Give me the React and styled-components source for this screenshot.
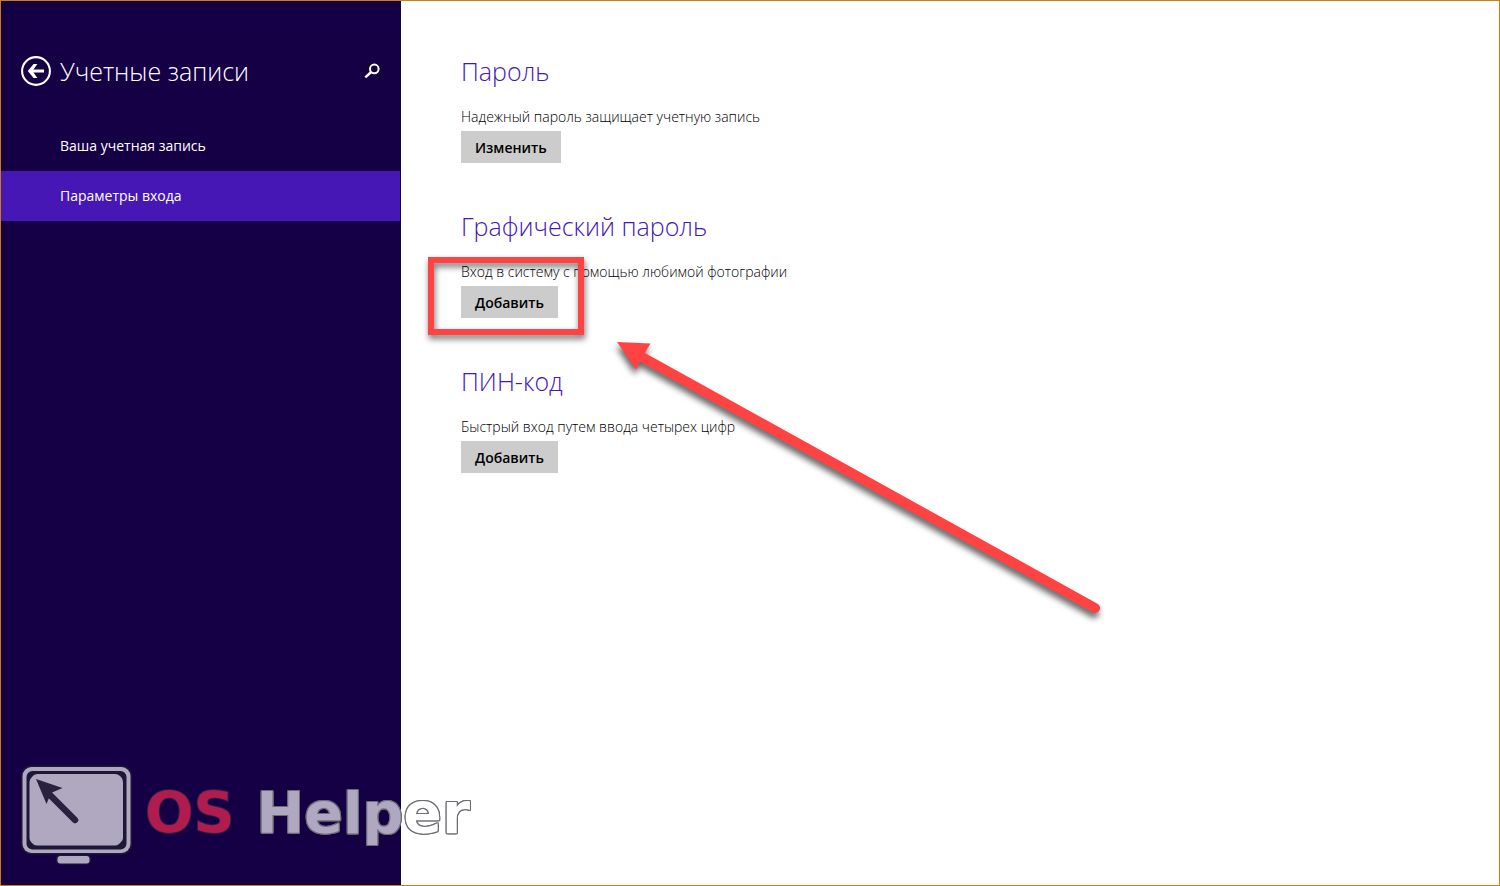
import React from "react";
import styled, { createGlobalStyle } from "styled-components";

const GlobalStyle = createGlobalStyle`
  * {
    box-sizing: border-box;
  }
  body {
    margin: 0;
    background: #fff;
    color: #000;
    font-family: "Open Sans", "Noto Sans", sans-serif;
    font-size: 14px;
  }
`;

const Page = styled.div`
  position: relative;
  display: flex;
  min-height: 100vh;
  border: 1px solid #d07c10;
  overflow: hidden;
`;

const Sidebar = styled.aside`
  display: flex;
  flex-direction: column;
  flex: 0 0 400px;
  padding-top: 52px;
  background: #160045;
  color: #fff;
`;

const Header = styled.header`
  display: flex;
  align-items: center;
  height: 36px;
  padding: 0 21px 0 20px;
  margin-bottom: 32px;
`;

const IconButton = styled.button`
  display: flex;
  padding: 0;
  border: none;
  background: transparent;
  color: inherit;
  cursor: pointer;
`;

const Title = styled.h1`
  flex: 1;
  margin: 0 0 0 9px;
  font-size: 25px;
  font-weight: 300;
  line-height: 36px;
`;

const NavLink = styled.a`
  display: block;
  height: 50px;
  margin-right: 1px;
  padding-left: 59px;
  line-height: 50px;
  color: #fff;
  text-decoration: none;
  background: ${({ $active }) => ($active ? "#4617b4" : "transparent")};
`;

const Main = styled.main`
  flex: 1;
  padding: 52px 60px;
`;

const Section = styled.section`
  position: relative;
  margin-bottom: 45px;
`;

const Heading = styled.h2`
  margin: 0 0 17px;
  font-size: 25px;
  font-weight: 300;
  line-height: 36px;
  color: #4617b4;
`;

const Description = styled.p`
  margin: 0 0 3px;
  font-weight: 300;
  line-height: 22px;
`;

const ActionButton = styled.button`
  display: block;
  height: 32px;
  padding: 0 14px;
  border: none;
  background: #ccc;
  color: #000;
  font-family: inherit;
  font-size: 14px;
  font-weight: 600;
  cursor: pointer;
`;

const Highlight = styled.div`
  position: absolute;
  top: 49px;
  left: -33px;
  width: 156px;
  height: 78px;
  border: 6px solid #ff4343;
  filter: drop-shadow(1px 4px 3px rgba(0, 0, 0, 0.55));
  pointer-events: none;
`;

const Arrow = styled.svg`
  position: absolute;
  top: 124px;
  left: 146px;
  filter: drop-shadow(-1px 5px 3px rgba(0, 0, 0, 0.6));
  pointer-events: none;
`;

const Logo = styled.div`
  position: absolute;
  left: 19px;
  bottom: 20px;
  display: flex;
  align-items: center;
  gap: 12px;
  pointer-events: none;
`;

const LogoText = styled.div`
  display: flex;
  gap: 22px;
  padding-bottom: 4px;
  font-family: "DejaVu Sans", sans-serif;
  font-size: 57px;
  font-weight: bold;
  line-height: 64px;
  paint-order: stroke;
  -webkit-text-stroke: 2px rgba(60, 60, 72, 0.5);
`;

const LogoOs = styled.span`
  color: #b01c4e;
`;

// the wordmark runs past the sidebar, so its fill turns white there
const LogoHelper = styled.span`
  color: transparent;
  background: linear-gradient(to right, #b0a8c0 145px, #fff 145px);
  background-clip: text;
  -webkit-text-stroke: 0;
  filter: drop-shadow(1px 0 0 #6c6c74) drop-shadow(-1px 0 0 #6c6c74)
    drop-shadow(0 1px 0 #6c6c74) drop-shadow(0 -1px 0 #6c6c74);
`;

const BackIcon = () => (
  <svg width="30" height="30" viewBox="0 0 30 30" fill="none" stroke="currentColor">
    <circle cx="15" cy="15" r="13.9" strokeWidth="2.1" />
    <path d="M9 15H23" strokeWidth="3" />
    <path d="M16.4 8H12.6L6.8 15L12.6 22H16.4L11.4 15Z" fill="currentColor" stroke="none" />
  </svg>
);

const SearchIcon = () => (
  <svg width="16" height="16" viewBox="0 0 16 16" fill="none" stroke="currentColor">
    <circle cx="10.3" cy="5.9" r="4.3" strokeWidth="2" />
    <path d="M7.2 9L1.3 14.4" strokeWidth="2.4" />
  </svg>
);

const MonitorIcon = () => (
  <svg width="113" height="100" viewBox="0 0 113 100">
    <rect x="1" y="0.5" width="111" height="89" rx="10" fill="#1d1838" />
    <rect x="2.5" y="2" width="108" height="86" rx="9" fill="#b0a8c0" />
    <rect x="6.5" y="6" width="100" height="78.5" rx="6" fill="#1d1838" />
    <path
      d="M18 9H95Q98 9 100 11L101 12Q103 14 103 17V73Q103 75 101 77L99 79Q97 80.5 95 80.5H17Q14 80.5 12 78L11 77Q9.5 75 9.5 73V17Q9.5 14 12 12Q14 9 18 9Z"
      fill="#b0a8c0"
    />
    <path d="M28 28L55 55" stroke="#29213f" strokeWidth="6.5" strokeLinecap="round" />
    <path d="M16 14L42.5 23L31 28L26.5 39Z" fill="#29213f" />
    <rect x="36" y="90" width="35" height="9.5" rx="4" fill="#1d1838" />
    <rect x="37.5" y="91" width="32" height="7.5" rx="3" fill="#b0a8c0" />
  </svg>
);

const sections = [
  {
    id: "password",
    title: "Пароль",
    text: "Надежный пароль защищает учетную запись",
    action: "Изменить",
  },
  {
    id: "picture",
    title: "Графический пароль",
    text: "Вход в систему с помощью любимой фотографии",
    action: "Добавить",
    marked: true,
  },
  {
    id: "pin",
    title: "ПИН-код",
    text: "Быстрый вход путем ввода четырех цифр",
    action: "Добавить",
  },
];

function App() {
  return (
    <>
      <GlobalStyle />
      <Page>
        <Sidebar>
          <Header>
            <IconButton type="button" aria-label="Назад">
              <BackIcon />
            </IconButton>
            <Title>Учетные записи</Title>
            <IconButton type="button" aria-label="Поиск">
              <SearchIcon />
            </IconButton>
          </Header>
          <nav>
            <NavLink href="#account">Ваша учетная запись</NavLink>
            <NavLink href="#signin" $active aria-current="page">
              Параметры входа
            </NavLink>
          </nav>
        </Sidebar>

        <Main>
          {sections.map(({ id, title, text, action, marked }) => (
            <Section key={id}>
              <Heading>{title}</Heading>
              <Description id={`${id}-text`}>{text}</Description>
              <ActionButton type="button" aria-describedby={`${id}-text`}>
                {action}
              </ActionButton>
              {marked && (
                <>
                  <Highlight />
                  <Arrow width="500" height="290" viewBox="0 0 500 290">
                    <path d="M26 20L488 276" stroke="#ff4343" strokeWidth="10" strokeLinecap="round" />
                    <path d="M10 10L43.5 11.5L36 24L29 37.5Z" fill="#ff4343" />
                  </Arrow>
                </>
              )}
            </Section>
          ))}
        </Main>

        <Logo>
          <MonitorIcon />
          <LogoText>
            <LogoOs>OS</LogoOs>
            <LogoHelper>Helper</LogoHelper>
          </LogoText>
        </Logo>
      </Page>
    </>
  );
}

export default App;
